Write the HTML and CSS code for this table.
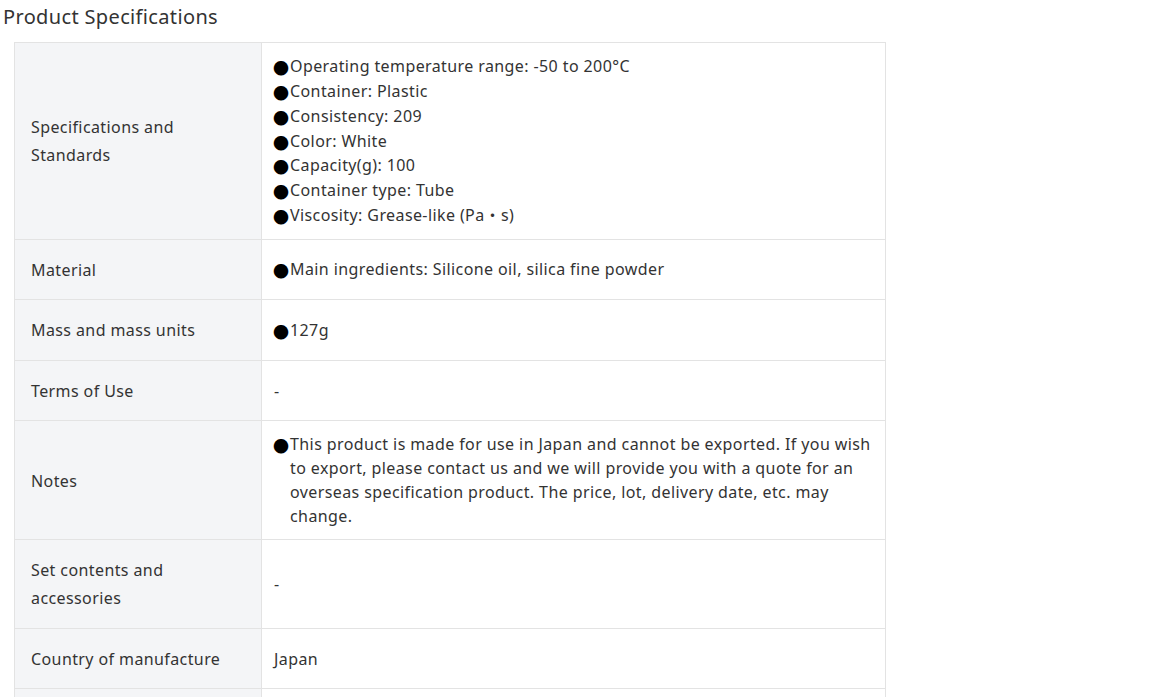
FILE: index.html
```html
<!DOCTYPE html>
<html lang="en">
<head>
<meta charset="utf-8">
<title>Product Specifications</title>
<link rel="stylesheet" href="styles.css">
</head>
<body>
<h2 class="title">Product Specifications</h2>
<table class="spec">
  <tr>
    <th>Specifications and Standards</th>
    <td>
      <ul class="bullets">
        <li>Operating temperature range: -50 to 200°C</li>
        <li>Container: Plastic</li>
        <li>Consistency: 209</li>
        <li>Color: White</li>
        <li>Capacity(g): 100</li>
        <li>Container type: Tube</li>
        <li>Viscosity: Grease-like (Pa・s)</li>
      </ul>
    </td>
  </tr>
  <tr>
    <th>Material</th>
    <td><ul class="bullets"><li>Main ingredients: Silicone oil, silica fine powder</li></ul></td>
  </tr>
  <tr>
    <th>Mass and mass units</th>
    <td><ul class="bullets"><li>127g</li></ul></td>
  </tr>
  <tr>
    <th>Terms of Use</th>
    <td>-</td>
  </tr>
  <tr>
    <th>Notes</th>
    <td><ul class="bullets notes"><li>This product is made for use in Japan and cannot be exported. If you wish to export, please contact us and we will provide you with a quote for an overseas specification product. The price, lot, delivery date, etc. may change.</li></ul></td>
  </tr>
  <tr>
    <th>Set contents and accessories</th>
    <td>-</td>
  </tr>
  <tr>
    <th>Country of manufacture</th>
    <td>Japan</td>
  </tr>
  <tr class="next-row">
    <th></th>
    <td></td>
  </tr>
</table>
</body>
</html>
```

FILE: styles.css
```css
html, body {
  margin: 0;
  padding: 0;
  background: #ffffff;
}
body {
  font-family: "Noto Sans", "Noto Sans CJK JP", sans-serif;
  color: #333333;
  font-size: 16px;
  letter-spacing: 0.4px;
}
.title {
  margin: 0;
  padding-left: 3px;
  font-size: 20px;
  font-weight: normal;
  line-height: 34px;
  letter-spacing: 0.35px;
  color: #333333;
}
.spec {
  margin: 8px 0 0 14px;
  width: 872px;
  border-collapse: collapse;
  table-layout: fixed;
}
.spec th,
.spec td {
  border: 1px solid #e3e3e3;
  vertical-align: middle;
  text-align: left;
  font-weight: normal;
}
.spec th {
  width: 214px;
  background: #f4f5f7;
  padding: 16px 16px 15.5px;
  line-height: 28px;
}
.spec td {
  padding: 11px 12px;
  line-height: 24px;
}
.next-row th,
.next-row td {
  height: 28px;
}
.bullets {
  list-style: none;
  margin: 0;
  padding: 0;
}
.bullets li {
  display: flex;
  line-height: 24.85px;
}
.bullets li::before {
  content: "●";
  color: #000000;
  flex: 0 0 16px;
  font-size: 16px;
  letter-spacing: 0;
  position: relative;
  top: 2px;
  left: -1px;
}
.notes li {
  line-height: 24px;
}
```
